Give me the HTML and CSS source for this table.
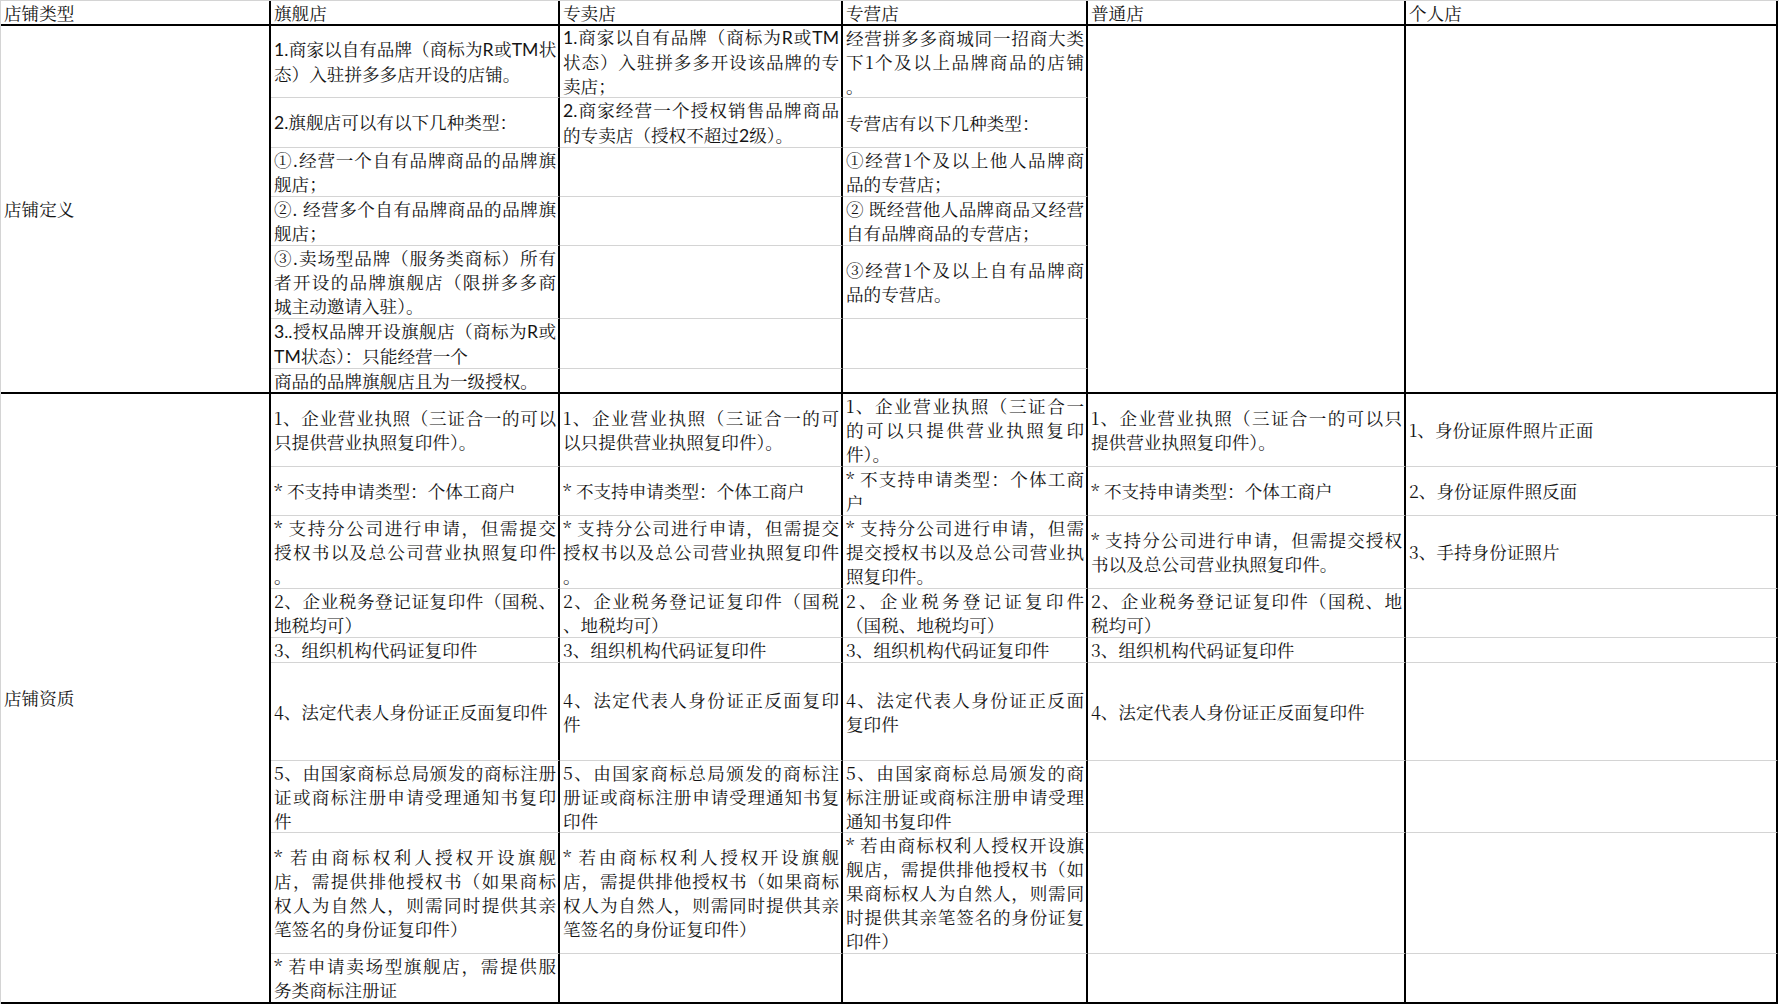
FILE: index.html
```html
<!DOCTYPE html>
<html lang="zh-CN">
<head>
<meta charset="utf-8">
<title>店铺类型</title>
<link rel="stylesheet" href="styles.css">
</head>
<body>
<div class="sheet">
  <div class="c h">店铺类型</div>
  <div class="c h">旗舰店</div>
  <div class="c h">专卖店</div>
  <div class="c h">专营店</div>
  <div class="c h">普通店</div>
  <div class="c h">个人店</div>

  <div class="c span7 end">店铺定义</div>
  <div class="c"><span class="j tight"><i class="lat">1.</i>商家以自有品牌（商标为<i class="lat">R</i>或<i class="lat">TM</i>状</span><span>态）入驻拼多多店开设的店铺。</span></div>
  <div class="c"><span class="j"><i class="lat">1.</i>商家以自有品牌（商标为<i class="lat">R</i>或<i class="lat">TM</i></span><span class="j">状态）入驻拼多多开设该品牌的专</span><span>卖店；</span></div>
  <div class="c"><span class="j">经营拼多多商城同一招商大类</span><span class="j">下1个及以上品牌商品的店铺</span><span>。</span></div>
  <div class="c span7 end"></div>
  <div class="c span7 end"></div>

  <div class="c"><span><i class="lat">2.</i>旗舰店可以有以下几种类型：</span></div>
  <div class="c"><span class="j"><i class="lat">2.</i>商家经营一个授权销售品牌商品</span><span>的专卖店（授权不超过<i class="lat">2</i>级）。</span></div>
  <div class="c"><span>专营店有以下几种类型：</span></div>

  <div class="c"><span class="j">①.经营一个自有品牌商品的品牌旗</span><span>舰店；</span></div>
  <div class="c"></div>
  <div class="c"><span class="j">①经营1个及以上他人品牌商</span><span>品的专营店；</span></div>

  <div class="c"><span class="j">②. 经营多个自有品牌商品的品牌旗</span><span>舰店；</span></div>
  <div class="c"></div>
  <div class="c"><span class="j">② 既经营他人品牌商品又经营</span><span>自有品牌商品的专营店；</span></div>

  <div class="c"><span class="j">③.卖场型品牌（服务类商标）所有</span><span class="j">者开设的品牌旗舰店（限拼多多商</span><span>城主动邀请入驻）。</span></div>
  <div class="c"></div>
  <div class="c"><span class="j">③经营1个及以上自有品牌商</span><span>品的专营店。</span></div>

  <div class="c"><span class="j"><i class="lat">3..</i>授权品牌开设旗舰店（商标为<i class="lat">R</i>或</span><span><i class="lat">TM</i>状态）：只能经营一个</span></div>
  <div class="c"></div>
  <div class="c"></div>

  <div class="c end"><span>商品的品牌旗舰店且为一级授权。</span></div>
  <div class="c end"></div>
  <div class="c end"></div>

  <div class="c span9 end">店铺资质</div>
  <div class="c"><span class="j">1、企业营业执照（三证合一的可以</span><span>只提供营业执照复印件）。</span></div>
  <div class="c"><span class="j">1、企业营业执照（三证合一的可</span><span>以只提供营业执照复印件）。</span></div>
  <div class="c"><span class="j">1、企业营业执照（三证合一</span><span class="j">的可以只提供营业执照复印</span><span>件）。</span></div>
  <div class="c"><span class="j">1、企业营业执照（三证合一的可以只</span><span>提供营业执照复印件）。</span></div>
  <div class="c"><span>1、身份证原件照片正面</span></div>

  <div class="c"><span>* 不支持申请类型：个体工商户</span></div>
  <div class="c"><span>* 不支持申请类型：个体工商户</span></div>
  <div class="c"><span class="j">* 不支持申请类型：个体工商</span><span>户</span></div>
  <div class="c"><span>* 不支持申请类型：个体工商户</span></div>
  <div class="c"><span>2、身份证原件照反面</span></div>

  <div class="c"><span class="j">* 支持分公司进行申请，但需提交</span><span class="j">授权书以及总公司营业执照复印件</span><span>。</span></div>
  <div class="c"><span class="j">* 支持分公司进行申请，但需提交</span><span class="j">授权书以及总公司营业执照复印件</span><span>。</span></div>
  <div class="c"><span class="j">* 支持分公司进行申请，但需</span><span class="j">提交授权书以及总公司营业执</span><span>照复印件。</span></div>
  <div class="c"><span class="j">* 支持分公司进行申请，但需提交授权</span><span>书以及总公司营业执照复印件。</span></div>
  <div class="c"><span>3、手持身份证照片</span></div>

  <div class="c"><span class="j">2、企业税务登记证复印件（国税、</span><span>地税均可）</span></div>
  <div class="c"><span class="j">2、企业税务登记证复印件（国税</span><span>、地税均可）</span></div>
  <div class="c"><span class="j">2、企业税务登记证复印件</span><span>（国税、地税均可）</span></div>
  <div class="c"><span class="j">2、企业税务登记证复印件（国税、地</span><span>税均可）</span></div>
  <div class="c"></div>

  <div class="c"><span>3、组织机构代码证复印件</span></div>
  <div class="c"><span>3、组织机构代码证复印件</span></div>
  <div class="c"><span>3、组织机构代码证复印件</span></div>
  <div class="c"><span>3、组织机构代码证复印件</span></div>
  <div class="c"></div>

  <div class="c"><span>4、法定代表人身份证正反面复印件</span></div>
  <div class="c"><span class="j">4、法定代表人身份证正反面复印</span><span>件</span></div>
  <div class="c"><span class="j">4、法定代表人身份证正反面</span><span>复印件</span></div>
  <div class="c"><span>4、法定代表人身份证正反面复印件</span></div>
  <div class="c"></div>

  <div class="c"><span class="j">5、由国家商标总局颁发的商标注册</span><span class="j">证或商标注册申请受理通知书复印</span><span>件</span></div>
  <div class="c"><span class="j">5、由国家商标总局颁发的商标注</span><span class="j">册证或商标注册申请受理通知书复</span><span>印件</span></div>
  <div class="c"><span class="j">5、由国家商标总局颁发的商</span><span class="j">标注册证或商标注册申请受理</span><span>通知书复印件</span></div>
  <div class="c"></div>
  <div class="c"></div>

  <div class="c"><span class="j">* 若由商标权利人授权开设旗舰</span><span class="j">店，需提供排他授权书（如果商标</span><span class="j">权人为自然人，则需同时提供其亲</span><span>笔签名的身份证复印件）</span></div>
  <div class="c"><span class="j">* 若由商标权利人授权开设旗舰</span><span class="j">店，需提供排他授权书（如果商标</span><span class="j">权人为自然人，则需同时提供其亲</span><span>笔签名的身份证复印件）</span></div>
  <div class="c"><span class="j">* 若由商标权利人授权开设旗</span><span class="j">舰店，需提供排他授权书（如</span><span class="j">果商标权人为自然人，则需同</span><span class="j">时提供其亲笔签名的身份证复</span><span>印件）</span></div>
  <div class="c"></div>
  <div class="c"></div>

  <div class="c end"><span class="j">* 若申请卖场型旗舰店，需提供服</span><span>务类商标注册证</span></div>
  <div class="c end"></div>
  <div class="c end"></div>
  <div class="c end"></div>
  <div class="c end"></div>
</div>
</body>
</html>
```

FILE: styles.css
```css
html, body {
  margin: 0;
  padding: 0;
  background: #ffffff;
}

body {
  font-family: "Noto Serif CJK SC", "Noto Sans CJK SC", sans-serif;
  font-size: 17.6px;
  line-height: 24px;
  color: #141414;
}

.sheet {
  display: grid;
  width: 1779px;
  box-sizing: border-box;
  border-top: 1px solid #d4d4d4;
  border-left: 1px solid #d4d4d4;
  grid-template-columns: 270px 289px 283px 245px 318px 372px;
  grid-template-rows:
    25px
    72px 50px 49px 49px 73px 50px 25px
    73px 49px 73px 49px 25px 98px 72px 121px 50px;
}

.c {
  box-sizing: border-box;
  display: flex;
  flex-direction: column;
  justify-content: center;
  padding: 0 2px 0 3px;
  border-right: 2px solid #000000;
  border-bottom: 1px solid #d4d4d4;
  overflow: visible;
  min-width: 0;
}

.c > span {
  display: block;
  text-align: left;
}

.c > span.j {
  text-align: justify;
  text-align-last: justify;
}

.c > span.tight {
  letter-spacing: -0.4px;
}

.lat {
  font-style: normal;
  font-family: Lato, "Liberation Sans", sans-serif;
  letter-spacing: 0;
}

.h {
  border-bottom: 2px solid #000000;
}

.end {
  border-bottom: 2px solid #000000;
}

.span7 {
  grid-row: span 7;
}

.span9 {
  grid-row: span 9;
}
```
